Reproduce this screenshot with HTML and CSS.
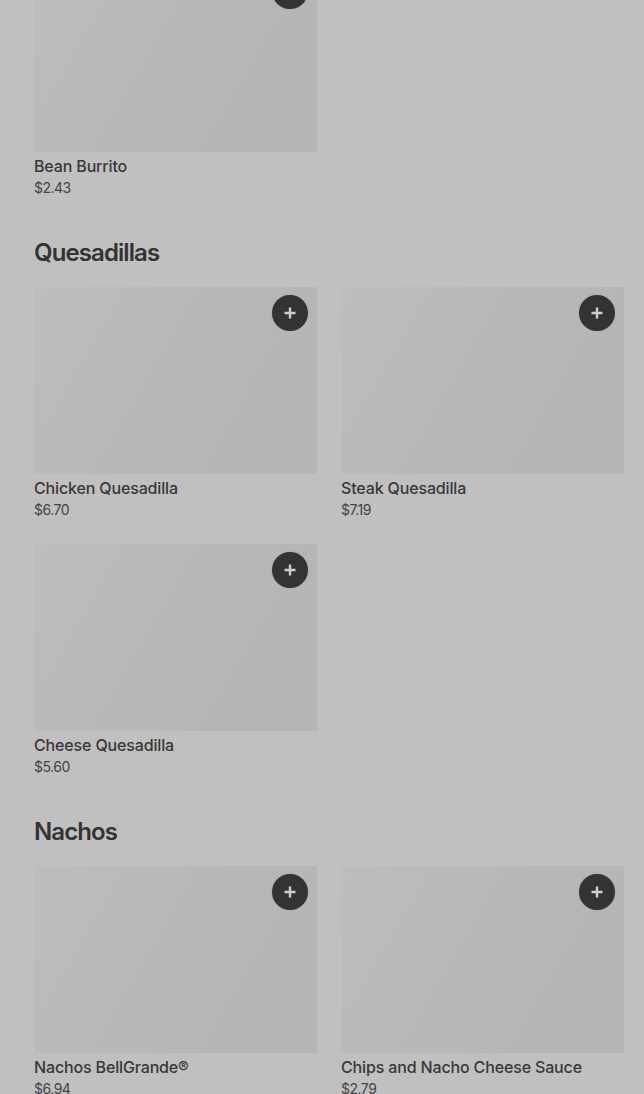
FILE: index.html
```html
<!DOCTYPE html>
<html>
<head>
<meta charset="utf-8">
<link rel="stylesheet" href="styles.css">
</head>
<body>
<div class="page">
  <section class="section first">
    <div class="grid">
      <div class="card">
        <div class="thumb"><button class="add"><svg viewBox="0 0 16 16" width="16" height="16"><path d="M8 2.5v11M2.5 8h11" stroke="currentColor" stroke-width="2.4" fill="none"/></svg></button></div>
        <div class="name">Bean Burrito</div>
        <div class="price">$2.43</div>
      </div>
    </div>
  </section>
  <section class="section">
    <h2 class="title">Quesadillas</h2>
    <div class="grid">
      <div class="card">
        <div class="thumb"><button class="add"><svg viewBox="0 0 16 16" width="16" height="16"><path d="M8 2.5v11M2.5 8h11" stroke="currentColor" stroke-width="2.4" fill="none"/></svg></button></div>
        <div class="name">Chicken Quesadilla</div>
        <div class="price">$6.70</div>
      </div>
      <div class="card">
        <div class="thumb"><button class="add"><svg viewBox="0 0 16 16" width="16" height="16"><path d="M8 2.5v11M2.5 8h11" stroke="currentColor" stroke-width="2.4" fill="none"/></svg></button></div>
        <div class="name">Steak Quesadilla</div>
        <div class="price">$7.19</div>
      </div>
      <div class="card">
        <div class="thumb"><button class="add"><svg viewBox="0 0 16 16" width="16" height="16"><path d="M8 2.5v11M2.5 8h11" stroke="currentColor" stroke-width="2.4" fill="none"/></svg></button></div>
        <div class="name">Cheese Quesadilla</div>
        <div class="price">$5.60</div>
      </div>
    </div>
  </section>
  <section class="section">
    <h2 class="title">Nachos</h2>
    <div class="grid">
      <div class="card">
        <div class="thumb"><button class="add"><svg viewBox="0 0 16 16" width="16" height="16"><path d="M8 2.5v11M2.5 8h11" stroke="currentColor" stroke-width="2.4" fill="none"/></svg></button></div>
        <div class="name">Nachos BellGrande®</div>
        <div class="price">$6.94</div>
      </div>
      <div class="card">
        <div class="thumb"><button class="add"><svg viewBox="0 0 16 16" width="16" height="16"><path d="M8 2.5v11M2.5 8h11" stroke="currentColor" stroke-width="2.4" fill="none"/></svg></button></div>
        <div class="name">Chips and Nacho Cheese Sauce</div>
        <div class="price">$2.79</div>
      </div>
    </div>
  </section>
</div>
</body>
</html>
```

FILE: styles.css
```css
html, body {
  margin: 0;
  padding: 0;
  background: #c0c0c0;
  overflow: hidden;
}
body {
  font-family: Inter, "Liberation Sans", sans-serif;
  color: #333333;
}
.page {
  padding: 0 20px 0 34px;
  margin-top: -35px;
}
.section {
  padding-bottom: 39px;
}
.title {
  margin: 0 0 18px 0;
  font-size: 24px;
  line-height: 32px;
  font-weight: 600;
  letter-spacing: -0.9px;
  color: #333333;
}
.grid {
  display: grid;
  grid-template-columns: 283px 283px;
  column-gap: 24px;
  row-gap: 24px;
}
.thumb {
  position: relative;
  height: 187px;
  background: linear-gradient(120deg, #bdbdbd 0%, #b8b8b8 45%, #b4b4b4 100%);
}
.add {
  position: absolute;
  top: 8px;
  right: 9px;
  width: 36px;
  height: 36px;
  border: none;
  border-radius: 50%;
  padding: 0;
  background: #333333;
  color: #cfcfcf;
  display: flex;
  align-items: center;
  justify-content: center;
  box-shadow: 0 0 2px rgba(0,0,0,0.15);
}
.name {
  margin-top: 2px;
  font-size: 16px;
  line-height: 24px;
  font-weight: 500;
  color: #383838;
  letter-spacing: -0.15px;
}
.price {
  font-size: 14px;
  line-height: 20px;
  font-weight: 400;
  color: #444444;
  letter-spacing: -0.5px;
}
```
